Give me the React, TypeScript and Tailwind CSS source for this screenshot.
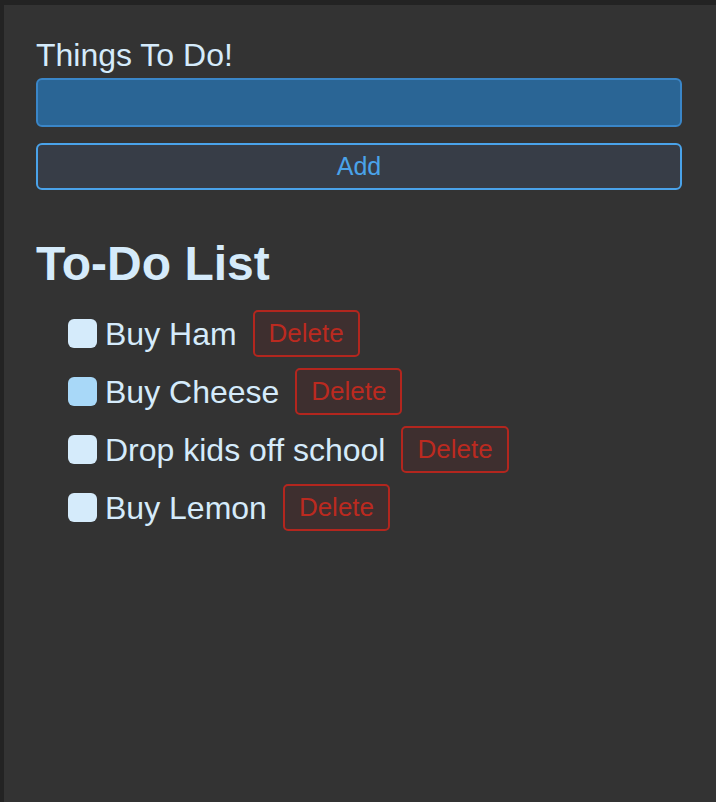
import React from "react";

const items = [
  { text: "Buy Ham", checked: false },
  { text: "Buy Cheese", checked: true },
  { text: "Drop kids off school", checked: false },
  { text: "Buy Lemon", checked: false },
];

export default function App() {
  return (
    <div
      className="min-h-[802px] bg-[#333333] border-t-[5px] border-l-[4px] border-[#232323] text-[#d5ebfb]"
      style={{ fontFamily: '"Liberation Sans", Arial, sans-serif' }}
    >
      <div className="pl-8 pr-[34px] pt-8">
        <div className="text-[32px] leading-[37px]">Things To Do!</div>
        <div className="mt-[4px] h-[49px] rounded-[6px] border-2 border-[#3a86c8] bg-[#2a6595]" />
        <button className="mt-4 flex h-[47px] w-full items-center justify-center rounded-[6px] border-2 border-[#4aa3ea] bg-[#373d47] text-[25px] text-[#4aa3ea]">
          Add
        </button>
        <h2 className="mt-[46px] text-[48px] font-bold leading-[56px]">To-Do List</h2>
        <ul className="mt-[18px] flex flex-col gap-[11px] pl-8">
          {items.map((it) => (
            <li key={it.text} className="flex h-[47px] items-center">
              <span
                className={
                  "h-[29px] w-[29px] rounded-[6px] " +
                  (it.checked ? "bg-[#a8d8f8]" : "bg-[#d5ebfb]")
                }
              />
              <span className="ml-2 text-[32px] leading-none">{it.text}</span>
              <button className="ml-4 flex h-[47px] items-center rounded-[5px] border-2 border-[#b3261e] bg-[#3e2f2f] px-[14px] text-[26px] text-[#bb2a20]">
                Delete
              </button>
            </li>
          ))}
        </ul>
      </div>
    </div>
  );
}
